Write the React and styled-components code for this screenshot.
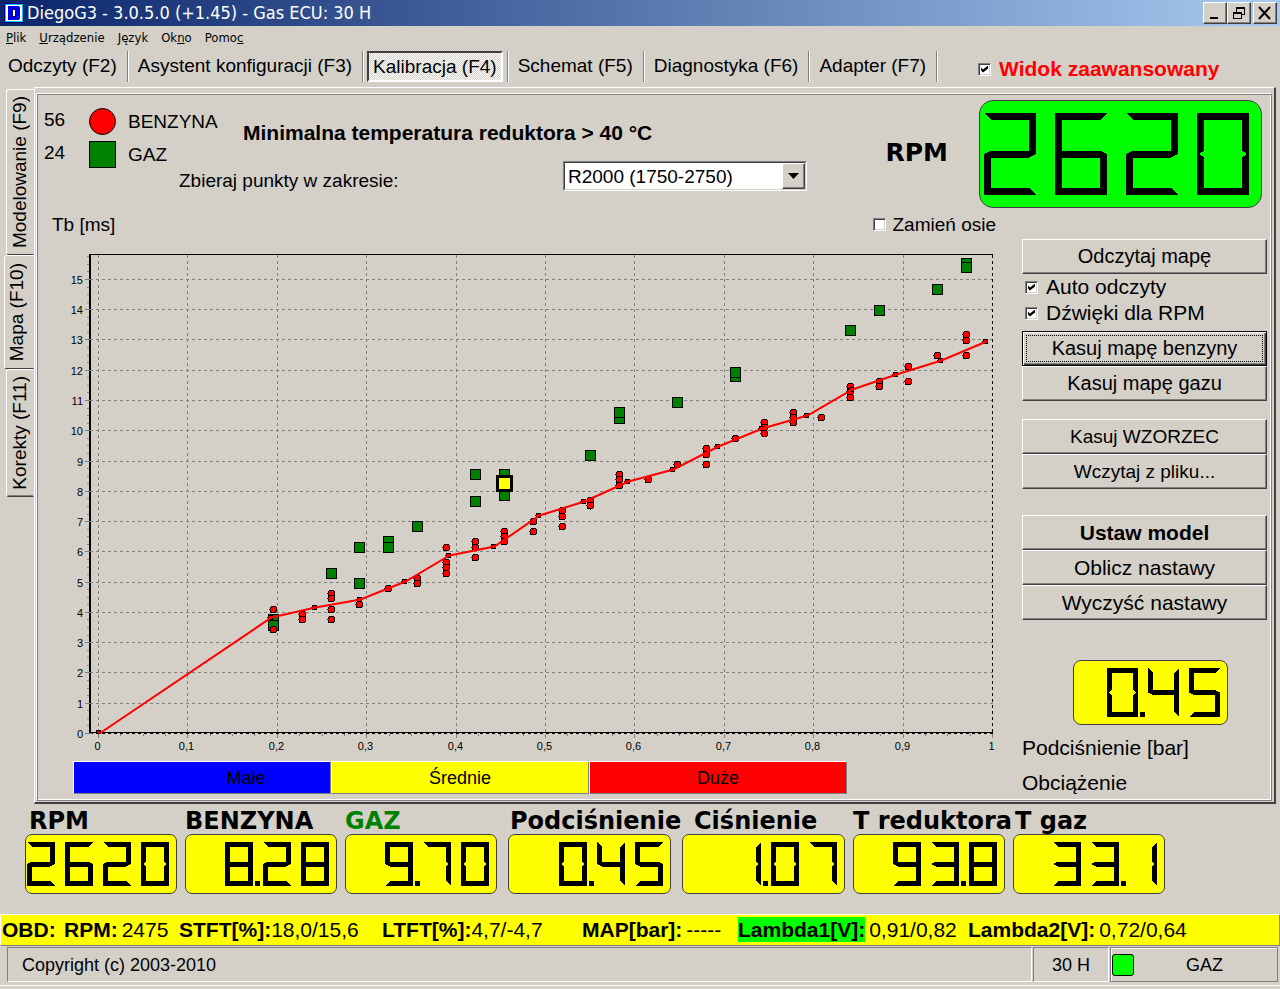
import { useState } from "react";
import styled, { createGlobalStyle, css } from "styled-components";

const GlobalStyle = createGlobalStyle`
  *, *::before, *::after {
    box-sizing: border-box;
  }
  body {
    margin: 0;
    background-color: #d4d0c8;
    font-family: "Liberation Sans", Arial, sans-serif;
    font-size: 19px;
    color: black;
  }
  button, select, input {
    font-family: inherit;
    color: inherit;
    margin: 0;
    padding: 0;
    border-radius: 0;
  }
`;

const raised = css`
  border: 1px solid;
  border-color: white #404040 #404040 white;
  box-shadow: inset -1px -1px 0 #808080;
`;

const sunken = css`
  border: 1px solid;
  border-color: #808080 white white #808080;
`;

const Window = styled.div`
  display: flex;
  flex-direction: column;
  min-width: 1180px;
`;

/* title bar */

const TitleBar = styled.header`
  height: 26px;
  display: flex;
  align-items: center;
  padding: 0 3px 0 4px;
  background: linear-gradient(to right, #0a246a, #a6caf0);
`;

const Title = styled.h1`
  flex: 1;
  margin: 0 0 0 3px;
  font-family: "DejaVu Sans Condensed", "DejaVu Sans", sans-serif;
  font-size: 18px;
  font-weight: 400;
  line-height: 24px;
  color: white;
`;

const WindowButton = styled.button`
  ${raised}
  width: 24px;
  height: 22px;
  display: flex;
  justify-content: center;
  align-items: center;
  background-color: #d4d0c8;
  margin-left: ${(props) => (props.$apart ? "2px" : "0")};
`;

/* menu */

const MenuBar = styled.nav`
  height: 24px;
  display: flex;
  align-items: center;
  gap: 13px;
  padding: 0 6px;
`;

const MenuItem = styled.button`
  border: none;
  background: none;
  font-family: "DejaVu Sans Condensed", "DejaVu Sans", sans-serif;
  font-size: 13px;
  line-height: 20px;
`;

/* toolbar */

const Toolbar = styled.div`
  height: 37px;
  display: flex;
  align-items: flex-start;
  padding-top: 1px;
`;

const ToolItem = styled.div`
  display: flex;
  height: 31px;
  padding: 0 4px;
  border-right: 1px solid #808080;
  box-shadow: 1px 0 0 white;
`;

const ToolButton = styled.button`
  padding: 0 5px 2px;
  border: 1px solid transparent;
  background: none;
  font-size: 19px;
  line-height: 26px;
  ${(props) =>
    props.$first &&
    css`
      padding-left: 3px;
    `}
  ${(props) =>
    props.$pressed &&
    css`
      border: 2px solid;
      border-color: #404040 white white #404040;
      padding: 0 4px;
      background: conic-gradient(
          #d4d0c8 25%,
          white 0 50%,
          #d4d0c8 0 75%,
          white 0
        )
        0 0 / 2px 2px;
    `}
`;

const CheckLabel = styled.label`
  display: flex;
  align-items: center;
  gap: ${(props) => props.$gap || 7}px;
  font-size: ${(props) => props.$size || 19}px;
  line-height: 26px;
`;

const AdvancedLabel = styled(CheckLabel)`
  margin: 5px 0 0 41px;
  font-weight: 700;
  color: red;
`;

const CheckBox = styled.input`
  appearance: none;
  width: 13px;
  height: 13px;
  display: flex;
  justify-content: center;
  align-items: center;
  background-color: white;
  border: 1px solid;
  border-color: #808080 white white #808080;
  box-shadow: inset 1px 1px 0 #404040, inset -1px -1px 0 #d4d0c8;
  &:checked::after {
    content: "";
    width: 7px;
    height: 7px;
    background-color: black;
    clip-path: polygon(0 28%, 28% 57%, 100% 0, 100% 42%, 28% 100%, 0 71%);
  }
`;

/* main area */

const Main = styled.main`
  display: flex;
  padding-right: 4px;
`;

const SideTabs = styled.div`
  width: 34px;
  display: flex;
  flex-direction: column;
  align-items: flex-end;
  padding-top: 2px;
`;

const SideTab = styled.button`
  width: ${(props) => (props.$active ? 30 : 28)}px;
  padding: ${(props) => (props.$active ? "7px 4px 7px 0" : "6px 0")};
  display: flex;
  justify-content: center;
  background: none;
  border: 1px solid;
  border-color: white transparent #404040 white;
  border-radius: 3px 0 0 3px;
  box-shadow: ${(props) => (props.$last ? "0 -1px 0 #808080 inset" : "none")};
  span {
    writing-mode: vertical-rl;
    transform: rotate(180deg);
    font-size: 19px;
    line-height: 24px;
  }
`;

const Page = styled.div`
  flex: 1;
  padding: 5px 2px 1px 1px;
  border: solid;
  border-width: 1px 2px 2px 1px;
  border-color: white #404040 #404040 white;
`;

const Panel = styled.div`
  border: 1px solid;
  border-color: white #808080 #808080 white;
  box-shadow: inset 1px 1px 0 #808080, inset -1px -1px 0 white;
  padding: 1px;
`;

const PanelHeader = styled.div`
  height: 114px;
  display: flex;
  padding: 5px 8px 0 6px;
`;

const Settings = styled.div`
  flex: 1;
  display: grid;
  grid-template-columns: 135px 64px 1fr;
  grid-template-rows: 61px 30px;
`;

const Legend = styled.div`
  grid-area: 1 / 1 / 3 / 3;
  padding-top: 8px;
`;

const LegendRow = styled.div`
  height: 33px;
  display: flex;
  align-items: flex-start;
`;

const LegendCount = styled.span`
  width: 45px;
  line-height: 24px;
`;

const LegendMark = styled.span`
  width: 27px;
  height: 27px;
  border: 1px solid black;
  border-radius: ${(props) => (props.$round ? "50%" : "0")};
  background-color: ${(props) => props.$color};
`;

const LegendName = styled.span`
  margin-left: 12px;
  line-height: 27px;
`;

const Notice = styled.strong`
  grid-area: 1 / 3;
  font-size: 21px;
  line-height: 26px;
  padding-top: 20px;
`;

const RangeRow = styled.div`
  grid-area: 2 / 2 / 3 / 4;
  display: flex;
  label {
    width: 384px;
    line-height: 40px;
  }
`;

const SelectBox = styled.div`
  position: relative;
  width: 244px;
  height: 30px;
  border: 1px solid;
  border-color: #808080 white white #808080;
`;

const Select = styled.select`
  appearance: none;
  width: 100%;
  height: 28px;
  padding-left: 3px;
  border: 1px solid;
  border-color: #404040 #d4d0c8 #d4d0c8 #404040;
  background-color: white;
  font-size: 19px;
`;

const SelectArrow = styled.span`
  ${raised}
  position: absolute;
  top: 1px;
  right: 1px;
  bottom: 1px;
  width: 23px;
  display: flex;
  justify-content: center;
  align-items: center;
  background-color: #d4d0c8;
  pointer-events: none;
`;

const RpmLabel = styled.div`
  font-family: "DejaVu Sans", Verdana, sans-serif;
  font-size: 25px;
  font-weight: 700;
  line-height: 30px;
  margin: 38px 31px 0 0;
`;

/* seven segment displays */

const Lcd = styled.div`
  width: ${(props) => props.$width}px;
  height: ${(props) => props.$height}px;
  padding-right: ${(props) => props.$inset}px;
  border: 1px solid #404040;
  border-radius: ${(props) => props.$radius}px;
  background-color: ${(props) => props.$color || "yellow"};
  display: flex;
  justify-content: flex-end;
  align-items: center;
`;

const lcdSizes = {
  small: { w: 28, h: 44, t: 5, pitch: 38, height: 60, radius: 7, inset: 7 },
  medium: { w: 31, h: 49, t: 5, pitch: 41, height: 65, radius: 8, inset: 7 },
  large: { w: 52, h: 82, t: 7, pitch: 71, height: 108, radius: 14, inset: 12 },
};

const segmentsOf = {
  0: "abcdef",
  1: "bc",
  2: "abged",
  3: "abgcd",
  4: "fgbc",
  5: "afgcd",
  6: "afgecd",
  7: "abc",
  8: "abcdefg",
  9: "abcdfg",
};

const segmentPoints = (name, { w, h, t }) => {
  const m = h / 2;
  const s = t / 2;
  const shapes = {
    a: [[0, 0], [w, 0], [w - t, t], [t, t]],
    b: [[w, 0], [w, m], [w - 2, m], [w - t, m - s], [w - t, t]],
    c: [[w, h], [w, m], [w - 2, m], [w - t, m + s], [w - t, h - t]],
    d: [[0, h], [w, h], [w - t, h - t], [t, h - t]],
    e: [[0, h], [0, m], [2, m], [t, m + s], [t, h - t]],
    f: [[0, 0], [0, m], [2, m], [t, m - s], [t, t]],
    g: [[0, m], [t, m - s], [w - t, m - s], [w, m], [w - t, m + s], [t, m + s]],
  };
  return shapes[name].map((p) => p.join(",")).join(" ");
};

const Display = ({ value, size = "small", width, color }) => {
  const dim = lcdSizes[size];
  const digits = value.replace(".", "");
  const point = value.indexOf(".");
  const total = dim.pitch * (digits.length - 1) + dim.w;

  return (
    <Lcd
      $width={width}
      $height={dim.height}
      $radius={dim.radius}
      $inset={dim.inset}
      $color={color}
    >
      <svg
        width={total}
        height={dim.h}
        shapeRendering="crispEdges"
        role="img"
        aria-label={value}
      >
        {[...digits].map((digit, i) => (
          <g key={i} transform={`translate(${i * dim.pitch} 0)`}>
            {[...segmentsOf[digit]].map((name) => (
              <polygon key={name} points={segmentPoints(name, dim)} />
            ))}
          </g>
        ))}
        {point > 0 && (
          <rect
            x={(point - 1) * dim.pitch + dim.w + 2}
            y={dim.h - dim.t}
            width={dim.t}
            height={dim.t}
          />
        )}
      </svg>
    </Lcd>
  );
};

/* chart */

const PanelBody = styled.div`
  display: flex;
  gap: 17px;
  padding: 0 3px 0 0;
`;

const ChartColumn = styled.div`
  flex: 1;
  min-width: 0;
  padding-bottom: 5px;
`;

const ChartTop = styled.div`
  height: 31px;
  display: flex;
  justify-content: space-between;
  align-items: center;
  padding: 0 9px 0 14px;
`;

const ChartSvg = styled.svg`
  display: block;
  width: 100%;
  height: auto;
  text {
    font-size: 11px;
  }
`;

const LoadBar = styled.div`
  display: flex;
  max-width: 774px;
  margin: 3px 0 0 35px;
`;

const LoadZone = styled.div`
  flex: 1;
  height: 33px;
  ${sunken}
  border-color: white #808080 #808080 white;
  background-color: ${(props) => props.$color};
  text-indent: ${(props) => props.$shift || 0}px;
  text-align: center;
  font-size: 18px;
  line-height: 32px;
`;

const firstCell = 0.1955;
const cellStep = 0.0323;
const cell = (i) => firstCell + cellStep * i;

const petrolPoints = [
  [4.11, 3.45],
  [3.93, 3.77],
  [4.62, 4.46, 4.11, 3.77],
  [4.26],
  [4.79],
  [5.12, 4.96],
  [6.14, 5.64, 5.48, 5.29],
  [6.34, 6.14, 5.81],
  [6.67, 6.51, 6.34],
  [7.0, 6.67],
  [7.37, 7.17, 6.84],
  [7.7, 7.53],
  [8.56, 8.39, 8.19],
  [8.39],
  [8.89],
  [9.42, 9.22, 8.89],
  [9.75],
  [10.27, 10.1, 9.91],
  [10.6, 10.44, 10.27],
  [10.44],
  [11.46, 11.3, 11.1],
  [11.63, 11.46],
  [12.12, 11.63],
  [12.49],
  [13.18, 12.98, 12.49],
];

const gasPoints = [
  [0, 3.75],
  [0, 3.58],
  [2, 5.27],
  [3, 6.13],
  [3, 4.94],
  [4, 6.33],
  [4, 6.13],
  [5, 6.84],
  [7, 8.54],
  [7, 7.68],
  [8, 8.54],
  [8, 7.85],
  [11, 9.2],
  [12, 10.42],
  [12, 10.59],
  [14, 10.92],
  [16, 11.78],
  [16, 11.94],
  [20, 13.33],
  [21, 13.99],
  [23, 14.68],
  [24, 15.54],
  [24, 15.38],
];

const modelLine = [
  3.83, 4.16, 4.43, 5.02, 5.88, 6.18, 7.2, 7.66, 8.33, 8.72, 9.48, 10.08, 10.5,
  11.36, 11.86, 12.32, 12.95,
].map((y, i) => [0.192 + 0.05 * i, y]);

const px = (v) => Math.round(60 + 894 * v) + 0.5;
const py = (v) => Math.round(493 - 30.27 * v) + 0.5;

const range = (n) => Array.from({ length: n }, (_, i) => i);

const Chart = () => {
  const left = 52;
  const right = px(1);
  const top = 14.5;
  const bottom = py(0);

  return (
    <ChartSvg
      viewBox="0 0 967 518"
      shapeRendering="crispEdges"
      role="img"
      aria-label="Tb [ms]"
    >
      <g stroke="#808080" strokeDasharray="3 3">
        {range(16).map((v) => (
          <line key={v} x1={left} x2={right} y1={py(v)} y2={py(v)} />
        ))}
        {range(11).map((v) => (
          <line key={v} x1={px(v / 10)} x2={px(v / 10)} y1={top} y2={bottom} />
        ))}
      </g>

      <line x1={left} x2={left} y1="14" y2="494" stroke="black" strokeWidth="2" />
      <line x1={left} x2={right} y1={top} y2={top} stroke="black" />
      <line x1={left} x2={right} y1="492.5" y2="492.5" stroke="black" />
      <g stroke="black" strokeDasharray="3 3">
        <line x1={left} x2={right} y1={bottom} y2={bottom} />
        <line x1={right} x2={right} y1={top} y2={bottom} />
      </g>

      <g stroke="#808080">
        {range(16).map((v) => (
          <line key={v} x1="47" x2="54" y1={py(v)} y2={py(v)} />
        ))}
        {range(64).map((v) => (
          <line key={v} x1="49" x2="51" y1={py(v / 4)} y2={py(v / 4)} />
        ))}
        {range(11).map((v) => (
          <line key={v} x1={px(v / 10)} x2={px(v / 10)} y1="494" y2="498" />
        ))}
        {range(41).map((v) => (
          <line key={v} x1={px(v / 40)} x2={px(v / 40)} y1="494" y2="496" />
        ))}
      </g>

      <g textAnchor="end">
        {range(16).map((v) => (
          <text key={v} x="45" y={py(v) + 4}>
            {v}
          </text>
        ))}
      </g>
      <g textAnchor="middle">
        {range(11).map((v) => (
          <text key={v} x={px(v / 10) - 1} y="510">
            {String(v / 10).replace(".", ",")}
          </text>
        ))}
      </g>

      <g fill="green" stroke="black">
        {gasPoints.map(([i, y], n) => (
          <rect key={n} x={px(cell(i)) - 5} y={py(y) - 5} width="10" height="10" />
        ))}
      </g>
      <g fill="red" stroke="black">
        {petrolPoints.map((ys, i) =>
          ys.map((y) => (
            <circle key={`${i}-${y}`} cx={px(cell(i))} cy={py(y)} r="3.5" />
          ))
        )}
        {modelLine.map(([x, y]) => (
          <circle key={x} cx={px(x)} cy={py(y)} r="2.5" />
        ))}
        <circle cx={px(0)} cy="492" r="2" />
      </g>
      <polyline
        points={[[0, 0], ...modelLine]
          .map(([x, y]) => `${px(x) + 1},${py(y)}`)
          .join(" ")}
        fill="none"
        stroke="red"
        strokeWidth="2"
        shapeRendering="auto"
      />
      <rect
        x={px(cell(8)) - 7}
        y={py(8.26) - 7}
        width="14"
        height="14"
        fill="yellow"
        stroke="black"
        strokeWidth="3"
      />
    </ChartSvg>
  );
};

/* right column */

const Actions = styled.div`
  width: 245px;
  display: flex;
  flex-direction: column;
  padding-top: 30px;
`;

const ButtonGroup = styled.div`
  display: flex;
  flex-direction: column;
  margin-bottom: ${(props) => props.$after || 0}px;
`;

const ActionButton = styled.button`
  ${raised}
  height: 35px;
  background-color: #d4d0c8;
  font-size: ${(props) => props.$size || 20}px;
  font-weight: ${(props) => (props.$bold ? 700 : 400)};
  ${(props) =>
    props.$focused &&
    css`
      border-color: black;
      box-shadow: inset 1px 1px 0 white, inset -1px -1px 0 #404040,
        inset -2px -2px 0 #808080;
      outline: 1px dotted black;
      outline-offset: -5px;
    `}
`;

const Options = styled.div`
  padding: 0 0 5px 3px;
`;

const VacuumBox = styled.div`
  padding: 0 39px 9px 51px;
`;

const SideText = styled.div`
  font-size: 21px;
  line-height: 28px;
  & + & {
    margin-top: 7px;
  }
`;

/* gauges */

const Gauges = styled.section`
  display: flex;
  gap: 8px;
  padding: 5px 25px 20px;
`;

const Gauge = styled.div`
  width: ${(props) => props.$width}px;
  margin-left: ${(props) => (props.$width > 152 ? 3 : 0)}px;
`;

const GaugeName = styled.div`
  font-family: "DejaVu Sans", Verdana, sans-serif;
  font-size: 24px;
  font-weight: 700;
  line-height: 25px;
  white-space: nowrap;
  padding-left: ${(props) => props.$indent}px;
  color: ${(props) => props.$color || "black"};
`;

const gauges = [
  { name: "RPM", value: "2620", width: 152, indent: 4 },
  { name: "BENZYNA", value: "8.28", width: 152, indent: 0 },
  { name: "GAZ", value: "9.70", width: 152, indent: 0, color: "green" },
  { name: "Podciśnienie", value: "0.45", width: 163, indent: 2 },
  { name: "Ciśnienie", value: "1.07", width: 163, indent: 12 },
  { name: "T reduktora", value: "93.8", width: 152, indent: 0 },
  { name: "T gaz", value: "33.1", width: 152, indent: 2 },
];

/* OBD line */

const ObdBar = styled.section`
  height: 32px;
  display: flex;
  align-items: center;
  padding: 0 0 2px 1px;
  border: 1px solid;
  border-color: white #808080 #808080 white;
  background-color: yellow;
  font-size: 21px;
  line-height: 25px;
  white-space: nowrap;
`;

const ObdTitle = styled.strong`
  width: 62px;
`;

const ObdItem = styled.div`
  display: flex;
  gap: ${(props) => props.$gap}px;
  width: ${(props) => props.$width}px;
  strong {
    background-color: ${(props) => (props.$lit ? "lime" : "transparent")};
  }
`;

const obdValues = [
  { name: "RPM:", value: "2475", width: 115, gap: 4 },
  { name: "STFT[%]:", value: "18,0/15,6", width: 203, gap: 0 },
  { name: "LTFT[%]:", value: "4,7/-4,7", width: 200, gap: 0 },
  { name: "MAP[bar]:", value: "-----", width: 156, gap: 4 },
  { name: "Lambda1[V]:", value: "0,91/0,82", width: 230, gap: 4, lit: true },
  { name: "Lambda2[V]:", value: "0,72/0,64", width: 230, gap: 4 },
];

/* status bar */

const StatusBar = styled.footer`
  height: 40px;
  display: flex;
  gap: 1px;
  padding: 1px 2px 3px 7px;
  border-bottom: 1px solid white;
  font-size: 18px;
  line-height: 34px;
`;

const StatusCell = styled.div`
  ${sunken}
  flex: ${(props) => (props.$width ? `0 0 ${props.$width}px` : 1)};
  padding-left: ${(props) => (props.$width ? 0 : 14)}px;
  text-align: ${(props) => (props.$width ? "center" : "left")};
`;

const FuelCell = styled.div`
  width: 168px;
  display: flex;
  align-items: center;
  padding-left: 1px;
  border: 1px solid #808080;
  box-shadow: inset 1px 1px 0 white;
  span {
    flex: 1;
    text-align: center;
    padding-right: 2px;
  }
`;

const FuelLamp = styled.i`
  width: 22px;
  height: 22px;
  border: 1px solid black;
  border-radius: 3px;
  background-color: lime;
`;

const Check = ({ label, checked = false, as: Label = CheckLabel, ...rest }) => {
  const [on, setOn] = useState(checked);
  return (
    <Label {...rest}>
      <CheckBox
        type="checkbox"
        checked={on}
        onChange={(e) => setOn(e.target.checked)}
      />
      {label}
    </Label>
  );
};

const tools = [
  "Odczyty (F2)",
  "Asystent konfiguracji (F3)",
  "Kalibracja (F4)",
  "Schemat (F5)",
  "Diagnostyka (F6)",
  "Adapter (F7)",
];

const App = () => {
  const [tool, setTool] = useState("Kalibracja (F4)");

  return (
    <>
      <GlobalStyle />
      <Window>
        <TitleBar>
          <svg width="20" height="20" shapeRendering="crispEdges">
            <rect width="20" height="20" fill="#000080" />
            <rect x="1" y="1" width="18" height="18" fill="#00c8ff" />
            <rect x="2" y="2" width="16" height="16" fill="white" />
            <path d="M4 3h10l2 2v10l-2 2H4z" fill="#0000f0" />
            <rect x="8" y="6" width="4" height="8" fill="#000060" />
            <rect x="9" y="7" width="2" height="6" fill="white" />
          </svg>
          <Title>DiegoG3 - 3.0.5.0 (+1.45) - Gas ECU: 30 H</Title>
          <WindowButton aria-label="Minimalizuj">
            <svg width="14" height="14" shapeRendering="crispEdges">
              <rect x="2" y="11" width="8" height="2" />
            </svg>
          </WindowButton>
          <WindowButton aria-label="Przywróć">
            <svg width="14" height="14" fill="none" shapeRendering="crispEdges">
              <path d="M4 1h9v2H4zM1 6h9v2H1z" fill="black" />
              <path d="M4.5 2v4M12.5 2v6.500H10M1.500 7v5.500h8V7" stroke="black" />
            </svg>
          </WindowButton>
          <WindowButton $apart aria-label="Zamknij">
            <svg width="14" height="14" stroke="black" strokeWidth="2">
              <path d="M1 1l11 12M12 1L1 13" />
            </svg>
          </WindowButton>
        </TitleBar>

        <MenuBar>
          <MenuItem>
            <u>P</u>lik
          </MenuItem>
          <MenuItem>
            <u>U</u>rządzenie
          </MenuItem>
          <MenuItem>
            <u>J</u>ęzyk
          </MenuItem>
          <MenuItem>
            Ok<u>n</u>o
          </MenuItem>
          <MenuItem>
            Pomo<u>c</u>
          </MenuItem>
        </MenuBar>

        <Toolbar>
          {tools.map((name, i) => (
            <ToolItem key={name}>
              <ToolButton
                $first={i === 0}
                $pressed={name === tool}
                onClick={() => setTool(name)}
              >
                {name}
              </ToolButton>
            </ToolItem>
          ))}
          <Check
            as={AdvancedLabel}
            label="Widok zaawansowany"
            $size={21}
            $gap={8}
            checked
          />
        </Toolbar>

        <Main>
          <SideTabs>
            <SideTab>
              <span>Modelowanie (F9)</span>
            </SideTab>
            <SideTab $active>
              <span>Mapa (F10)</span>
            </SideTab>
            <SideTab $last>
              <span>Korekty (F11)</span>
            </SideTab>
          </SideTabs>

          <Page>
            <Panel>
              <PanelHeader>
                <Settings>
                  <Legend>
                    <LegendRow>
                      <LegendCount>56</LegendCount>
                      <LegendMark $color="red" $round />
                      <LegendName>BENZYNA</LegendName>
                    </LegendRow>
                    <LegendRow>
                      <LegendCount>24</LegendCount>
                      <LegendMark $color="green" />
                      <LegendName>GAZ</LegendName>
                    </LegendRow>
                  </Legend>
                  <Notice>Minimalna temperatura reduktora &gt; 40 °C</Notice>
                  <RangeRow>
                    <label htmlFor="range">Zbieraj punkty w zakresie:</label>
                    <SelectBox>
                      <Select id="range">
                        <option>R2000 (1750-2750)</option>
                      </Select>
                      <SelectArrow>
                        <svg width="11" height="6">
                          <path d="M0 0h11L5.500 6z" />
                        </svg>
                      </SelectArrow>
                    </SelectBox>
                  </RangeRow>
                </Settings>
                <RpmLabel>RPM</RpmLabel>
                <Display value="2620" size="large" width={283} color="lime" />
              </PanelHeader>

              <PanelBody>
                <ChartColumn>
                  <ChartTop>
                    <span>Tb [ms]</span>
                    <Check label="Zamień osie" />
                  </ChartTop>
                  <Chart />
                  <LoadBar>
                    <LoadZone $color="blue" $shift={88}>
                      Małe
                    </LoadZone>
                    <LoadZone $color="yellow">Średnie</LoadZone>
                    <LoadZone $color="red">Duże</LoadZone>
                  </LoadBar>
                </ChartColumn>

                <Actions>
                  <ButtonGroup>
                    <ActionButton>Odczytaj mapę</ActionButton>
                  </ButtonGroup>
                  <Options>
                    <Check label="Auto odczyty" $size={21} $gap={8} checked />
                    <Check label="Dźwięki dla RPM" $size={21} $gap={8} checked />
                  </Options>
                  <ButtonGroup $after={18}>
                    <ActionButton $focused>Kasuj mapę benzyny</ActionButton>
                    <ActionButton>Kasuj mapę gazu</ActionButton>
                  </ButtonGroup>
                  <ButtonGroup $after={26}>
                    <ActionButton $size={19}>Kasuj WZORZEC</ActionButton>
                    <ActionButton $size={19}>Wczytaj z pliku...</ActionButton>
                  </ButtonGroup>
                  <ButtonGroup $after={40}>
                    <ActionButton $size={21} $bold>
                      Ustaw model
                    </ActionButton>
                    <ActionButton $size={21}>Oblicz nastawy</ActionButton>
                    <ActionButton $size={21}>Wyczyść nastawy</ActionButton>
                  </ButtonGroup>
                  <VacuumBox>
                    <Display value="0.45" size="medium" width={155} />
                  </VacuumBox>
                  <SideText>Podciśnienie [bar]</SideText>
                  <SideText>Obciążenie</SideText>
                </Actions>
              </PanelBody>
            </Panel>
          </Page>
        </Main>

        <Gauges>
          {gauges.map((gauge) => (
            <Gauge key={gauge.name} $width={gauge.width}>
              <GaugeName $indent={gauge.indent} $color={gauge.color}>
                {gauge.name}
              </GaugeName>
              <Display value={gauge.value} width={gauge.width} />
            </Gauge>
          ))}
        </Gauges>

        <ObdBar>
          <ObdTitle>OBD:</ObdTitle>
          {obdValues.map((item) => (
            <ObdItem
              key={item.name}
              $width={item.width}
              $gap={item.gap}
              $lit={item.lit}
            >
              <strong>{item.name}</strong>
              <span>{item.value}</span>
            </ObdItem>
          ))}
        </ObdBar>

        <StatusBar>
          <StatusCell>Copyright (c) 2003-2010</StatusCell>
          <StatusCell $width={76}>30 H</StatusCell>
          <FuelCell>
            <FuelLamp />
            <span>GAZ</span>
          </FuelCell>
        </StatusBar>
      </Window>
    </>
  );
};

export default App;
